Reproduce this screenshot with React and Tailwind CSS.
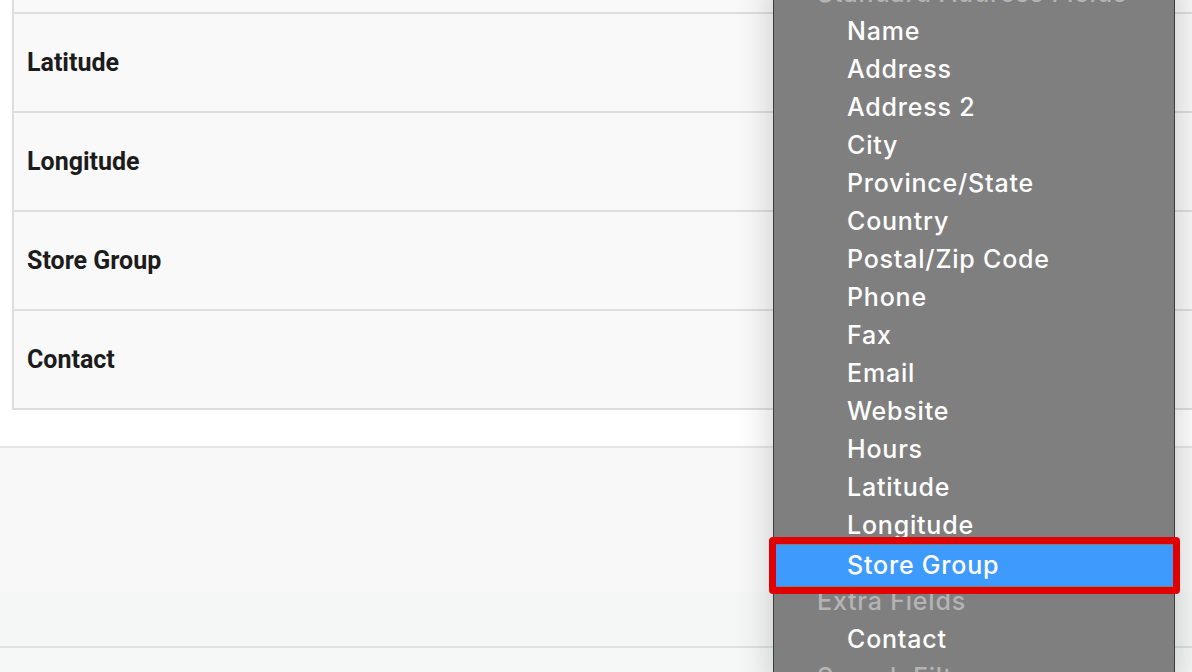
import React from 'react';

const rows = ['Latitude', 'Longitude', 'Store Group', 'Contact'];

const menu = [
  { label: 'Standard Address Fields', header: true },
  { label: 'Name' },
  { label: 'Address' },
  { label: 'Address 2' },
  { label: 'City' },
  { label: 'Province/State' },
  { label: 'Country' },
  { label: 'Postal/Zip Code' },
  { label: 'Phone' },
  { label: 'Fax' },
  { label: 'Email' },
  { label: 'Website' },
  { label: 'Hours' },
  { label: 'Latitude' },
  { label: 'Longitude' },
  { label: 'Store Group', active: true },
  { label: 'Extra Fields', header: true },
  { label: 'Contact' },
  { label: 'Search Filters', header: true },
];

export default function App() {
  return (
    <div className="relative w-[1192px] h-[672px] overflow-hidden bg-white font-['Roboto',sans-serif]">
      {/* Table */}
      <div className="pl-3 -mt-[87px]">
        <div className="border-l-2 border-[#dedede] bg-[#f9f9f9]">
          <div className="h-[101px] border-b-2 border-[#dedede]" />
          {rows.map((r) => (
            <div key={r} className="h-[99px] border-b-2 border-[#dedede] flex items-center pl-[13px]">
              <span className="text-[25px] font-bold text-[#1c1c1c]">{r}</span>
            </div>
          ))}
        </div>
      </div>

      <div className="h-[36px]" />
      <div className="h-[146px] border-t-2 border-[#e6e6e6] bg-[#f8f8f8] shadow-[0_2px_3px_rgba(0,0,0,0.08)]" />
      <div className="h-[56px] bg-[#f5f6f6] border-b-2 border-[#e0e0e0]" />
      <div className="h-[40px] bg-[#f6f7f7]" />

      {/* Dropdown menu */}
      <div className="absolute left-[773px] top-[-25px] w-[402px] h-[720px] bg-[#7f7f7f] border-x border-[#3c3c3c] shadow-[0_0_36px_rgba(0,0,0,0.2)] font-['Inter',sans-serif] font-medium tracking-[0.8px]">
        {menu.map((m) =>
          m.header ? (
            <div key={m.label} className="h-[38px] flex items-center pl-[43px] text-[25px] text-[#b4b4b4] whitespace-nowrap">
              {m.label}
            </div>
          ) : (
            <div
              key={m.label}
              className={`flex items-center pl-[73px] text-[25px] text-white whitespace-nowrap ${m.active ? 'h-[41px] bg-[#3e9bfd] mb-[-3px]' : 'h-[38px]'}`}
            >
              {m.label}
            </div>
          )
        )}
      </div>

      {/* Red highlight box */}
      <div className="absolute left-[769px] top-[537px] w-[411px] h-[57px] border-[7px] border-[#e00000] rounded-[4px]" />
    </div>
  );
}
